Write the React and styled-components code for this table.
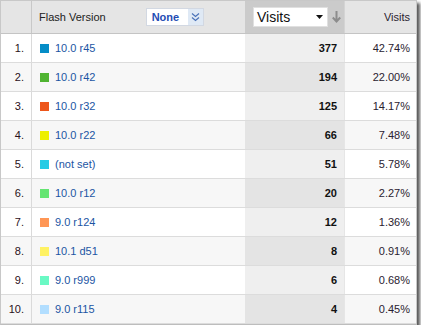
import React from 'react';
import styled, { createGlobalStyle } from 'styled-components';

const GlobalStyle = createGlobalStyle`
  html, body {
    margin: 0;
    padding: 0;
    background: #ffffff;
  }
  body {
    font-family: "Liberation Sans", Arial, sans-serif;
  }
`;

const Frame = styled.div`
  width: 415px;
  border: 1px solid #c8c8c8;
  border-bottom-color: #bdbdbd;
  box-shadow: 3px 3px 3px rgba(0, 0, 0, 0.65);
  background: #ffffff;
`;

const Row = styled.div`
  display: grid;
  grid-template-columns: 31px 213px 100px 1fr;
  height: ${(p) => (p.$head ? '32px' : '28px')};
  border-bottom: 1px solid ${(p) => (p.$head ? '#c4c4c4' : '#dcdcdc')};
  background: ${(p) => (p.$head ? '#e5e5e5' : p.$even ? '#f7f7f7' : '#ffffff')};
  font-size: 11px;
  color: #222;
`;

const IndexCell = styled.div`
  display: flex;
  align-items: center;
  justify-content: flex-end;
  padding-right: 7px;
  border-right: 1px solid ${(p) => (p.$head ? '#c8c8c8' : '#dadada')};
  color: #2a1020;
`;

const NameCell = styled.div`
  display: flex;
  align-items: center;
  padding-left: ${(p) => (p.$head ? '7px' : '8px')};
  gap: 6px;
`;

const VisitsCell = styled.div`
  display: flex;
  align-items: center;
  justify-content: flex-end;
  padding-right: 7px;
  background: ${(p) => (p.$even ? '#e4e4e4' : '#efefef')};
  border-right: 1px solid #e6e6e6;
  font-weight: bold;
  color: #111;
`;

const PercentCell = styled.div`
  display: flex;
  align-items: center;
  justify-content: flex-end;
  padding-right: 6px;
  color: #2a2230;
`;

const Swatch = styled.span`
  width: 9px;
  height: 9px;
  background: ${(p) => p.$color};
  flex: none;
`;

const Label = styled.span`
  color: #1c55a3;
`;

const HeadTitle = styled.span`
  color: #222;
`;

const NoneSelect = styled.div`
  display: flex;
  align-items: stretch;
  margin-left: 34px;
  height: 16px;
  border: 1px solid #d2d8e2;
  background: #ffffff;
`;

const NoneText = styled.span`
  display: flex;
  align-items: center;
  padding: 0 6px 0 5px;
  font-weight: bold;
  color: #1f4db4;
  width: 30px;
`;

const NoneArrow = styled.span`
  display: flex;
  align-items: center;
  justify-content: center;
  width: 15px;
  background: #dfe9f5;
`;

const MetricHead = styled.div`
  display: flex;
  align-items: center;
  justify-content: flex-end;
  gap: 4px;
  padding-right: 3px;
  background: #cbcbcb;
  border-right: 1px solid #d4d4d4;
`;

const MetricSelect = styled.div`
  display: flex;
  align-items: center;
  justify-content: space-between;
  width: 66px;
  height: 18px;
  padding: 0 4px 0 3px;
  background: #ffffff;
  border: 1px solid #e0e0e0;
  font-size: 14px;
  color: #111;
`;

const rows = [
  { name: '10.0 r45', color: '#058dc7', visits: 377, pct: '42.74%' },
  { name: '10.0 r42', color: '#50b432', visits: 194, pct: '22.00%' },
  { name: '10.0 r32', color: '#ed561b', visits: 125, pct: '14.17%' },
  { name: '10.0 r22', color: '#edef00', visits: 66, pct: '7.48%' },
  { name: '(not set)', color: '#24cbe5', visits: 51, pct: '5.78%' },
  { name: '10.0 r12', color: '#64e572', visits: 20, pct: '2.27%' },
  { name: '9.0 r124', color: '#ff9655', visits: 12, pct: '1.36%' },
  { name: '10.1 d51', color: '#fff263', visits: 8, pct: '0.91%' },
  { name: '9.0 r999', color: '#6af9c4', visits: 6, pct: '0.68%' },
  { name: '9.0 r115', color: '#b2deff', visits: 4, pct: '0.45%' },
];

const DoubleChevron = () => (
  <svg width="9" height="10" viewBox="0 0 9 10">
    <path d="M1 1.5 L4.5 4.5 L8 1.5 M1 5.5 L4.5 8.5 L8 5.5" fill="none" stroke="#4a72b8" strokeWidth="1.2" />
  </svg>
);

const Caret = () => (
  <svg width="7" height="4" viewBox="0 0 7 4">
    <path d="M0 0 H7 L3.5 4 Z" fill="#111" />
  </svg>
);

const SortArrow = () => (
  <svg width="9" height="12" viewBox="0 0 9 12">
    <path d="M4.5 0 V10 M0.8 6.5 L4.5 10.5 L8.2 6.5" fill="none" stroke="#8c8c8c" strokeWidth="2" />
  </svg>
);

const App = () => (
  <>
    <GlobalStyle />
    <Frame>
      <Row $head>
        <IndexCell $head />
        <NameCell $head>
          <HeadTitle>Flash Version</HeadTitle>
          <NoneSelect>
            <NoneText>None</NoneText>
            <NoneArrow>
              <DoubleChevron />
            </NoneArrow>
          </NoneSelect>
        </NameCell>
        <MetricHead>
          <MetricSelect>
            Visits
            <Caret />
          </MetricSelect>
          <SortArrow />
        </MetricHead>
        <PercentCell>Visits</PercentCell>
      </Row>
      {rows.map((r, i) => (
        <Row key={r.name} $even={i % 2 === 1}>
          <IndexCell>{i + 1}.</IndexCell>
          <NameCell>
            <Swatch $color={r.color} />
            <Label>{r.name}</Label>
          </NameCell>
          <VisitsCell $even={i % 2 === 1}>{r.visits}</VisitsCell>
          <PercentCell>{r.pct}</PercentCell>
        </Row>
      ))}
    </Frame>
  </>
);

export default App;
